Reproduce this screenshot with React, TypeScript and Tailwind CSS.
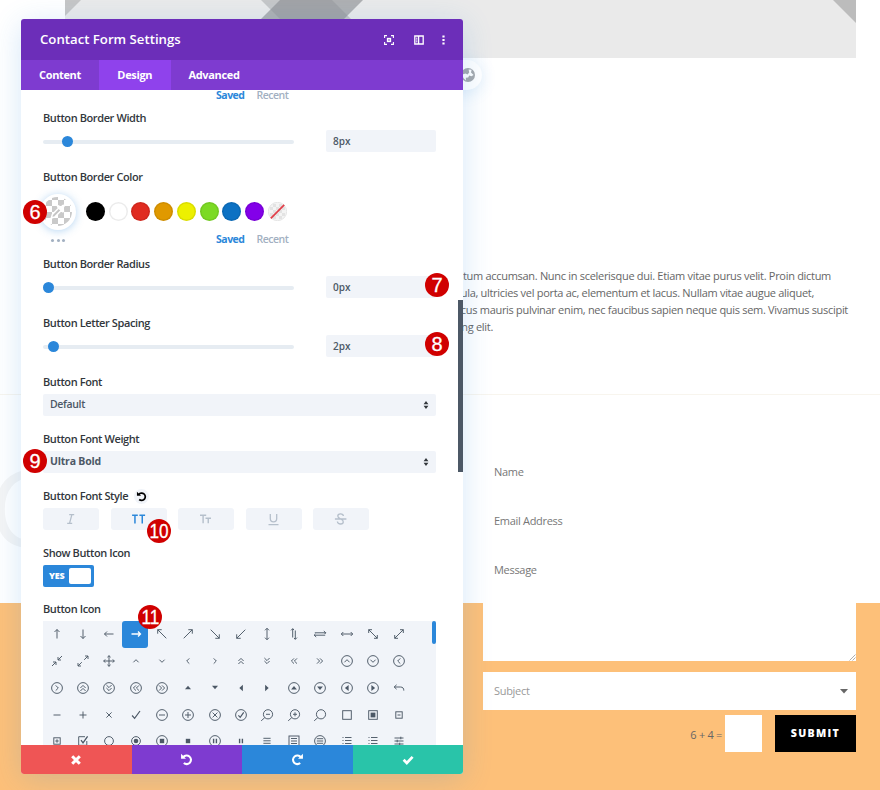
import { ReactNode } from 'react'

const FONT = "font-['Open_Sans','Noto_Sans',sans-serif]"

// glyph helpers, all drawn around 0,0
const Ring = () => <circle r="5.4" />
const Box = ({ s = 4.3 }: { s?: number }) => <rect x={-s} y={-s} width={s * 2} height={s * 2} />
const Line = ({ d }: { d: string }) => <path d={d} />
const Solid = ({ d }: { d: string }) => <path d={d} fill="currentColor" stroke="none" />

const UP = 'M-2.6 1.3L0 -1.3L2.6 1.3'
const DOWN = 'M-2.6 -1.3L0 1.3L2.6 -1.3'
const LEFT = 'M1.3 -2.6L-1.3 0L1.3 2.6'
const RIGHT = 'M-1.3 -2.6L1.3 0L-1.3 2.6'
const UP2 = 'M-2.6 0L0 -2.6L2.6 0M-2.6 3L0 .4L2.6 3'
const DOWN2 = 'M-2.6 -3L0 -.4L2.6 -3M-2.6 0L0 2.6L2.6 0'
const LEFT2 = 'M0 -2.6L-2.6 0L0 2.6M3 -2.6L.4 0L3 2.6'
const RIGHT2 = 'M-3 -2.6L-.4 0L-3 2.6M0 -2.6L2.6 0L0 2.6'
const LIST = 'M-2 -3.5H4.5M-2 -.5H4.5M-2 2.5H4.5M-4.5 -3.5H-3.5M-4.5 -.5H-3.5M-4.5 2.5H-3.5'
const LENS = 'M-2.2 2.6L-5.8 5.8'

const glyphs: ReactNode[] = [
  <Line d="M0 4.5V-4.5M-2.5 -2L0 -4.5L2.5 -2" />,
  <Line d="M0 -4.5V4.5M-2.5 2L0 4.5L2.5 2" />,
  <Line d="M4.5 0H-4.5M-2 -2.5L-4.5 0L-2 2.5" />,
  <Line d="M-4.5 0H4.5M2 -2.5L4.5 0L2 2.5" />,
  <Line d="M4.3 4.3L-4.3 -4.3M-4.3 -.3V-4.3H-.3" />,
  <Line d="M-4.3 4.3L4.3 -4.3M.3 -4.3H4.3V-.3" />,
  <Line d="M-4.3 -4.3L4.3 4.3M4.3 .3V4.3H.3" />,
  <Line d="M4.3 -4.3L-4.3 4.3M-4.3 .3V4.3H-.3" />,
  <Line d="M0 -5.7V5.7M-2 -3.7L0 -5.7L2 -3.7M-2 3.7L0 5.7L2 3.7" />,
  <Line d="M-1.3 3.5V-5.3M-3 -3.6L-1.3 -5.3L0 -4M1.3 -3.5V5.3M3 3.6L1.3 5.3L0 4" />,
  <Line d="M-5.2 -1.2H5.8M3.8 -3L5.8 -1.2L4.6 0M5.2 1.2H-5.8M-3.8 3L-5.8 1.2L-4.6 0" />,
  <Line d="M-5.7 0H5.7M-3.7 -2L-5.7 0L-3.7 2M3.7 -2L5.7 0L3.7 2" />,
  <Line d="M-4.3 -4.3L4.3 4.3M-4.3 -1V-4.3H-1M4.3 1V4.3H1" />,
  <Line d="M-4.3 4.3L4.3 -4.3M1 -4.3H4.3V-1M-4.3 1V4.3H-1" />,

  <Line d="M5 -5L1 -1M1 -4V-1H4M-5 5L-1 1M-4 1H-1V4" />,
  <Line d="M1.2 -1.2L5 -5M2 -5H5V-2M-1.2 1.2L-5 5M-5 2V5H-2" />,
  <Line d="M0 -5.3V5.3M-5.3 0H5.3M-1.6 -3.8L0 -5.3L1.6 -3.8M-1.6 3.8L0 5.3L1.6 3.8M-3.8 -1.6L-5.3 0L-3.8 1.6M3.8 -1.6L5.3 0L3.8 1.6" />,
  <Line d={UP} />,
  <Line d={DOWN} />,
  <Line d={LEFT} />,
  <Line d={RIGHT} />,
  <Line d={UP2} />,
  <Line d={DOWN2} />,
  <Line d={LEFT2} />,
  <Line d={RIGHT2} />,
  <><Ring /><Line d={UP} /></>,
  <><Ring /><Line d={DOWN} /></>,
  <><Ring /><Line d={LEFT} /></>,

  <><Ring /><Line d={RIGHT} /></>,
  <><Ring /><Line d={UP2} /></>,
  <><Ring /><Line d={DOWN2} /></>,
  <><Ring /><Line d={LEFT2} /></>,
  <><Ring /><Line d={RIGHT2} /></>,
  <Solid d="M-3 1.2L0 -2.3L3 1.2Z" />,
  <Solid d="M-3 -2.3L0 1.2L3 -2.3Z" />,
  <Solid d="M1.9 -3.2L-1.7 0L1.9 3.2Z" />,
  <Solid d="M-1.9 -3.2L1.7 0L-1.9 3.2Z" />,
  <><Ring /><Solid d="M-2.9 1.6L0 -2.1L2.9 1.6Z" /></>,
  <><Ring /><Solid d="M-2.9 -1.6L0 2.1L2.9 -1.6Z" /></>,
  <><Ring /><Solid d="M1.6 -2.9L-2.1 0L1.6 2.9Z" /></>,
  <><Ring /><Solid d="M-1.6 -2.9L2.1 0L-1.6 2.9Z" /></>,
  <Line d="M-2.4 -3.2L-4.8 -1L-2.4 1.2M-4.8 -1H1.5C4 -1 4.8 .5 4.8 2.6" />,

  <Line d="M-3.5 0H3.5" />,
  <Line d="M-3.5 0H3.5M0 -3.5V3.5" />,
  <Line d="M-2.6 -2.6L2.6 2.6M2.6 -2.6L-2.6 2.6" />,
  <path d="M-3.9 .5L-1.4 3.3L4 -4" strokeWidth="1.2" />,
  <><Ring /><Line d="M-3 0H3" /></>,
  <><Ring /><Line d="M-3 0H3M0 -3V3" /></>,
  <><Ring /><Line d="M-2.4 -2.4L2.4 2.4M2.4 -2.4L-2.4 2.4" /></>,
  <><Ring /><path d="M-2.6 .4L-.8 2.3L2.7 -2.6" strokeWidth="1.2" /></>,
  <><circle cx="1" cy="-.7" r="4.6" /><Line d={LENS} /><Line d="M-1 -.7H3" /></>,
  <><circle cx="1" cy="-.7" r="4.6" /><Line d={LENS} /><Line d="M-1 -.7H3M1 -2.7V1.3" /></>,
  <><circle cx="1" cy="-.7" r="4.6" /><Line d={LENS} /></>,
  <Box />,
  <><Box /><Solid d="M-2.4 -2.4H2.4V2.4H-2.4Z" /></>,
  <><Box s={3.2} /><Line d="M-1.5 0H1.5" /></>,

  <><Box s={3.2} /><Line d="M-1.7 0H1.7M0 -1.7V1.7" /></>,
  <><Line d="M2 -4.3H-4.3V4.3H3.8V0" /><path d="M-2 -.8L0 1.8L4.6 -4.6" strokeWidth="1.3" /></>,
  <circle r="4.4" />,
  <><circle r="4.4" /><circle r="2.3" fill="currentColor" stroke="none" /></>,
  <><Ring /><Solid d="M-2.2 -2.2H2.2V2.2H-2.2Z" /></>,
  <Solid d="M-2.2 -2.2H2.2V2.2H-2.2Z" />,
  <><Ring /><path d="M-1.4 -2.3V2.3M1.4 -2.3V2.3" strokeWidth="1.4" /></>,
  <path d="M-1.4 -2.3V2.3M1.4 -2.3V2.3" strokeWidth="1.4" />,
  <Line d="M-3.6 -2.7H3.6M-3.6 -.2H3.6M-3.6 2.3H3.6" />,
  <><Box s={5} /><Line d="M-3 -2.5H3M-3 0H3M-3 2.5H3" /></>,
  <><Ring /><Line d="M-3.2 -2.3H3.2M-3.2 0H3.2M-3.2 2.3H3.2" /></>,
  <Line d={LIST} />,
  <Line d={LIST} />,
  <Line d="M-4.5 -3H4.5M-4.5 0H4.5M-4.5 3H4.5M1.8 -4.3V-1.7M-1.8 -1.3V1.3M.7 1.7V4.3" />,
]

const swatches = ['bg-black', 'bg-white', 'bg-[#e02b20]', 'bg-[#e09900]', 'bg-[#edf000]', 'bg-[#7cda24]', 'bg-[#0c71c3]', 'bg-[#8300e9]']

function Label({ children }: { children: ReactNode }) {
  return <div className="mb-1 flex h-4 items-center gap-[6px] whitespace-nowrap text-[11px] font-semibold tracking-[-.4px] text-[#32373c]">{children}</div>
}

function SliderField({ label, value, knob }: { label: string; value: string; knob: string }) {
  return (
    <div className="h-[59px]">
      <Label>{label}</Label>
      <div className="flex h-[22px] items-center">
        <div className="mt-px flex h-[4px] w-[251px] items-center rounded-full bg-[#e6ecf2]">
          <div className={`size-[11px] rounded-full bg-[#2b87da] ${knob}`} />
        </div>
        <div className="ml-8 flex h-full w-[110px] items-center rounded-[2px] bg-[#f1f4f9] px-[7px] text-[10px] font-semibold text-[#4c5866]">{value}</div>
      </div>
    </div>
  )
}

function SelectField({ label, value, bold }: { label: string; value: string; bold?: boolean }) {
  return (
    <div className="h-[57px]">
      <Label>{label}</Label>
      <div className={`flex h-[22px] w-[393px] items-center justify-between rounded-[2px] bg-[#f1f4f9] pl-[7px] pr-[5.5px] text-[#4c5866] ${bold ? 'text-[10.5px] font-bold tracking-[-.2px]' : 'text-[10.5px] font-semibold tracking-[-.35px]'}`}>
        {value}
        <svg className="size-[10px] text-[#32373c]" viewBox="0 0 10 10" fill="currentColor">
          <path d="M2.6 4.3L5 .9L7.4 4.3ZM2.6 5.7L5 9.1L7.4 5.7Z" />
        </svg>
      </div>
    </div>
  )
}

function SavedTabs() {
  return (
    <div className="flex gap-3 pl-[173px] text-[10.5px] leading-4">
      <span className="font-bold tracking-[-.5px] text-[#2b87da]">Saved</span>
      <span className="font-semibold tracking-[-.5px] text-[#a2b0c1]">Recent</span>
    </div>
  )
}

function Undo({ className }: { className: string }) {
  return (
    <svg className={className} viewBox="0 0 12 12" fill="none" stroke="currentColor" strokeWidth="1.9">
      <path d="M3 3.8A4 4 0 1 1 3.5 9.3" />
      <path d="M1 .8V5.3H5.5Z" fill="currentColor" stroke="none" />
    </svg>
  )
}

function StyleButtons() {
  const cell = 'flex h-[22px] w-[56px] items-center justify-center rounded-[3px] bg-[#f1f4f9]'
  return (
    <div className="flex gap-[11.5px] text-[#b5bfcb]">
      <div className={cell}>
        <svg className="size-[14px]" viewBox="0 0 14 14" fill="none" stroke="currentColor" strokeWidth="1.3">
          <path d="M5.2 2.7H10.2M3.2 11.3H8.2M7.9 2.7L5.5 11.3" />
        </svg>
      </div>
      <div className={`${cell} text-[#2b87da]`}>
        <svg className="h-[14px] w-4" viewBox="0 0 16 14" fill="none" stroke="currentColor" strokeWidth="1.5">
          <path d="M1.1 3.2H6.8M3.95 3.2V11.5M8.4 3.2H14.1M11.25 3.2V11.5" />
        </svg>
      </div>
      <div className={cell}>
        <svg className="h-[14px] w-4" viewBox="0 0 16 14" fill="none" stroke="currentColor" strokeWidth="1.4">
          <path d="M2 3.2H8.2M5.1 3.2V11.3M7.5 6.3H13M10.25 6.3V11.3" />
        </svg>
      </div>
      <div className={cell}>
        <svg className="size-[14px]" viewBox="0 0 14 14" fill="none" stroke="currentColor" strokeWidth="1.3">
          <path d="M3.3 2V6.5C3.3 11 9.7 11 9.7 6.5V2M1.5 12.6H11.5" />
        </svg>
      </div>
      <div className={cell}>
        <svg className="size-[14px]" viewBox="0 0 14 14" fill="none" stroke="currentColor" strokeWidth="1.3">
          <path d="M9.4 4C9.1 1 3.8 1.2 3.8 4C3.8 6 6.1 6.3 7.1 7.1C10.1 8.2 10 12 6.7 12C4.6 12 3.5 11 3.4 9.5M.9 7H12.4" />
        </svg>
      </div>
    </div>
  )
}

function ColorRow() {
  return (
    <div className="h-[87px]">
      <Label>Button Border Color</Label>
      <div className="flex h-[45px] items-center gap-[3.75px]">
        <div className="-ml-[3.5px] mr-[6.5px] flex size-9 shrink-0 items-center justify-center rounded-full bg-white shadow-[0_1px_8px_rgba(43,135,218,.35)]">
          <svg className="size-[29px] rounded-full" viewBox="0 0 29 29">
            <defs>
              <pattern id="checks" width="12" height="12" x="3" y="3" patternUnits="userSpaceOnUse">
                <path d="M0 0H12V12H0Z" fill="#fff" />
                <path d="M0 0H6V6H0ZM6 6H12V12H6Z" fill="#c9c9c9" />
              </pattern>
            </defs>
            <rect width="29" height="29" fill="url(#checks)" />
            <path d="M8.3 21L9.4 17.4L16 10.8L18.5 13.3L11.9 19.9Z" fill="#c4c4c4" stroke="#fff" strokeWidth="1.5" />
            <path d="M15.3 9.5L19.8 14M17.7 11.6L20.3 9" stroke="#fff" strokeWidth="3" strokeLinecap="round" />
          </svg>
        </div>
        {swatches.map((color) => (
          <div key={color} className={`size-[19px] shrink-0 rounded-full shadow-[inset_0_0_0_1.5px_rgba(0,0,0,.08)] ${color}`} />
        ))}
        <svg className="size-[19px]" viewBox="0 0 19 19">
          <circle cx="9.5" cy="9.5" r="9.2" fill="#f4f4f4" stroke="#e6e6e6" />
          <path d="M5 2H8V5H5ZM11 2H14V5H11ZM2 5H5V8H2ZM8 5H11V8H8ZM14 5H17V8H14ZM5 8H8V11H5ZM11 8H14V11H11ZM2 11H5V14H2ZM8 11H11V14H8ZM14 11H17V14H14ZM5 14H8V17H5ZM11 14H14V17H11Z" fill="#e3e3e3" />
          <path d="M2.8 16.4L16.2 2.8" stroke="#e0404a" strokeWidth="1.8" />
        </svg>
      </div>
      <div className="-mt-[3px] flex items-center">
        <div className="-mr-[22px] ml-2 mt-[2px] flex gap-[2.5px]">
          <i className="size-[3px] rounded-full bg-[#a2b0c1]" />
          <i className="size-[3px] rounded-full bg-[#a2b0c1]" />
          <i className="size-[3px] rounded-full bg-[#a2b0c1]" />
        </div>
        <SavedTabs />
      </div>
    </div>
  )
}

function IconPicker() {
  return (
    <div className="flex h-[150px] w-[393px] items-start justify-between bg-[#f1f4f9]">
      <div className="grid w-[369px] grid-cols-14 auto-rows-[26.75px]">
        {glyphs.map((glyph, i) => (
          <div key={i} className={`flex items-center justify-center pl-[.8px] ${i === 3 ? 'rounded-[3px] bg-[#2b87da] text-white' : 'text-[#4c5866]'}`}>
            <svg className="size-4" viewBox="-8 -8 16 16" fill="none" stroke="currentColor" strokeWidth={i === 3 ? 1.3 : 0.95}>
              {glyph}
            </svg>
          </div>
        ))}
      </div>
      <div className="h-[23px] w-1 rounded-[2px] bg-[#2b87da]" />
    </div>
  )
}

function SettingsModal() {
  return (
    <div className="absolute left-[21px] top-[19px] flex h-[755px] w-[442px] flex-col overflow-hidden rounded-[3px] bg-white shadow-[0_5px_30px_rgba(43,135,218,.2)]">
      <header className="flex h-[41px] shrink-0 items-center bg-[#6c2eb9] pl-[19px] pr-[17.5px] text-white">
        <h1 className="mr-auto text-[13.2px] font-semibold">Contact Form Settings</h1>
        <svg className="mr-[19.5px] size-[10px]" viewBox="0 0 10 10" fill="none" stroke="currentColor" strokeWidth="1.1">
          <path d="M.6 3V.6H3M7 .6H9.4V3M9.4 7V9.4H7M3 9.4H.6V7" />
          <rect x="3.6" y="3.6" width="2.8" height="2.8" strokeWidth="1.5" />
        </svg>
        <svg className="mr-[17px] size-[10px]" viewBox="0 0 10 10" fill="none" stroke="currentColor" strokeWidth="1.3">
          <path d="M.8 1H9.2V9H.8ZM4.6 1V9" />
          <path d="M2 3.2H3.4M2 5H3.4M2 6.8H3.4" strokeWidth="1" />
        </svg>
        <svg className="h-[10px] w-[5px]" viewBox="0 0 5 10" fill="currentColor">
          <path d="M1.4 .5H3.6V2.5H1.4ZM1.4 4H3.6V6H1.4ZM1.4 7.5H3.6V9.5H1.4Z" />
        </svg>
      </header>
      <nav className="flex h-[30px] shrink-0 items-stretch bg-[#7e3bd0] text-[11px] font-bold tracking-[-.35px] text-white">
        <span className="flex w-[78px] items-center justify-center">Content</span>
        <span className="flex w-[71.5px] items-center justify-center bg-[#8f42ec]">Design</span>
        <span className="flex w-[87px] items-center justify-center">Advanced</span>
      </nav>
      <div className="flex min-h-0 flex-1 justify-between overflow-hidden">
        <div className="pl-[22px]">
          <div className="-mt-[3px] h-[23px]">
            <SavedTabs />
          </div>
          <SliderField label="Button Border Width" value="8px" knob="ml-[19px]" />
          <ColorRow />
          <SliderField label="Button Border Radius" value="0px" knob="ml-0" />
          <SliderField label="Button Letter Spacing" value="2px" knob="ml-[5px]" />
          <SelectField label="Button Font" value="Default" />
          <SelectField label="Button Font Weight" value="Ultra Bold" bold />
          <div className="h-[57px]">
            <Label>
              Button Font Style
              <span className="flex size-[15px] items-center justify-center rounded-full bg-[#f1f4f9]">
                <Undo className="size-[11px] text-black" />
              </span>
            </Label>
            <StyleButtons />
          </div>
          <div className="h-14">
            <Label>Show Button Icon</Label>
            <div className="flex h-[22px] w-[51px] items-center justify-between rounded-[2px] bg-[#2b87da] pl-[6px] pr-[3px] text-[9px] font-extrabold tracking-[-.2px] text-white">
              YES
              <div className="h-4 w-[22.5px] rounded-[2px] bg-white" />
            </div>
          </div>
          <Label>Button Icon</Label>
          <IconPicker />
        </div>
        <div className="mt-[210px] h-[172px] w-[5px] bg-[#4c5866]" />
      </div>
      <footer className="grid h-[29px] shrink-0 grid-cols-4 text-white">
        <div className="flex items-center justify-center bg-[#ef5555]">
          <svg className="size-3" viewBox="0 0 12 12" fill="none" stroke="currentColor" strokeWidth="3">
            <path d="M2.2 2.2L9.8 9.8M9.8 2.2L2.2 9.8" />
          </svg>
        </div>
        <div className="flex items-center justify-center bg-[#7e3bd0]">
          <Undo className="size-[13px]" />
        </div>
        <div className="flex items-center justify-center bg-[#2b87da]">
          <Undo className="size-[13px] -scale-x-100" />
        </div>
        <div className="flex items-center justify-center bg-[#29c4a9]">
          <svg className="size-3" viewBox="0 0 12 12" fill="none" stroke="currentColor" strokeWidth="2.7">
            <path d="M1.6 5.8L4.8 9L10.6 2.8" />
          </svg>
        </div>
      </footer>
    </div>
  )
}

function Marker({ n, className }: { n: number; className: string }) {
  return (
    <div className={`absolute flex size-6 items-center justify-center rounded-full bg-[#d00000] font-['Liberation_Sans',sans-serif] text-[20px] leading-none text-white ${className}`}>
      <span className={n > 9 ? 'scale-x-[.86] [-webkit-text-stroke:.3px_white]' : '[-webkit-text-stroke:.3px_white]'}>{n}</span>
    </div>
  )
}

function Page() {
  return (
    <div className="flex h-full flex-col">
      <svg className="ml-[65px] h-[58px] w-[791px] shrink-0 bg-[#eaeaea]" viewBox="65 0 791 58">
        <path d="M65 0H81L65 16Z" fill="#c6c6c6" />
        <path d="M261 0H332L352 20H281Z" fill="#c6c7c8" />
        <path d="M280 0H363L343 20H260Z" fill="#8f9193" fillOpacity=".65" />
        <path d="M833 0H856V23Z" fill="#bcbcbc" />
      </svg>
      <div className="h-[337px] shrink-0 border-b border-[#f8f5ee] pt-[208.5px] text-[11px] leading-[17.2px] tracking-[-.3px] text-[#666]">
        <p className="flex w-[831px] justify-end whitespace-nowrap">elementum accumsan. Nunc in scelerisque dui. Etiam vitae purus velit. Proin dictum</p>
        <p className="flex w-[814px] justify-end whitespace-nowrap">ligula, ultricies vel porta ac, elementum et lacus. Nullam vitae augue aliquet,</p>
        <p className="flex w-[848px] justify-end whitespace-nowrap">lacus mauris pulvinar enim, nec faucibus sapien neque quis sem. Vivamus suscipit</p>
        <p className="flex w-[493px] justify-end whitespace-nowrap">adipiscing elit.</p>
      </div>
      <div className="flex flex-1 bg-[linear-gradient(#fff_208px,#fdc079_208px)] pt-[58px]">
        <div className="w-[483px] overflow-hidden text-[106px] leading-[106px] text-[#f5f5f5]">
          <div className="-ml-[11px]">C</div>
        </div>
        <form className="w-[373px] text-[11px] tracking-[-.3px] text-[#777]">
          <div className="mb-[11px] flex h-[38px] items-center bg-white pl-[11px]">Name</div>
          <div className="mb-[11px] flex h-[38px] items-center bg-white pl-[11px]">Email Address</div>
          <div className="mb-[11.5px] flex h-[109.5px] justify-between bg-white pl-[11px] pt-[11px]">
            Message
            <svg className="mt-auto size-[8px]" viewBox="0 0 8 8" stroke="#999" strokeWidth=".8">
              <path d="M1.5 7.5L7.5 1.5M4.5 7.5L7.5 4.5" />
            </svg>
          </div>
          <div className="mb-[5px] flex h-[38px] items-center justify-between bg-white pl-[11px] pr-2 text-[#999]">
            Subject
            <svg className="h-[5px] w-2" viewBox="0 0 8 5" fill="#666">
              <path d="M0 0H8L4 4.5Z" />
            </svg>
          </div>
          <div className="flex items-center justify-end">
            <span className="mr-[3px] mt-[3px] text-[#666]">6 + 4 =</span>
            <div className="mr-[13px] h-[37px] w-[37px] bg-white" />
            <button className="h-[37px] w-[81px] bg-black text-[10.6px] font-extrabold tracking-[1.3px] text-white">SUBMIT</button>
          </div>
        </form>
      </div>
    </div>
  )
}

export default function App() {
  return (
    <div className={`relative h-[790px] w-[880px] overflow-hidden bg-white ${FONT}`}>
      <Page />
      <div className="absolute left-[440px] top-[60px] flex h-[30px] w-[42px] items-center justify-end rounded-full bg-white pr-[7px] shadow-[0_3px_16px_rgba(43,135,218,.15)]">
        <svg className="size-[14px]" viewBox="0 0 14 14">
          <circle cx="7" cy="7" r="7" fill="#a5a8ac" />
          <path d="M1.5 6.5L4.5 5.5L6.5 6.5L8.2 4.5L7.6 1.6L10.6 1.8L10 4.6L12.6 7L10.4 8.2L8.2 7.6L7.2 9.4L4.8 9.8L5 12.4L2.4 10Z" fill="#fff" />
        </svg>
      </div>
      <SettingsModal />
      <Marker n={6} className="left-[23px] top-[200px]" />
      <Marker n={7} className="left-[425px] top-[273px]" />
      <Marker n={8} className="left-[425px] top-[332px]" />
      <Marker n={9} className="left-[23px] top-[449px]" />
      <Marker n={10} className="left-[147px] top-[519px]" />
      <Marker n={11} className="left-[138px] top-[605px]" />
    </div>
  )
}
